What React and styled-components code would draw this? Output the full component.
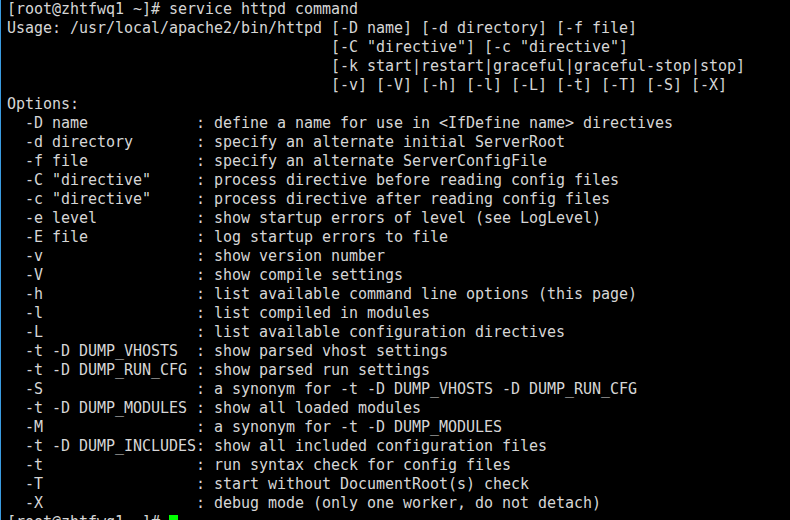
import styled, { createGlobalStyle } from "styled-components"

const Global = createGlobalStyle`
  html, body {
    margin: 0;
    padding: 0;
    background: #000;
  }
`

const Terminal = styled.div`
  width: 790px;
  height: 520px;
  overflow: hidden;
  background: #000;
  border-left: 1px solid #3a9be0;
  box-sizing: border-box;
  padding-left: 6px;
`

const Screen = styled.pre`
  margin: 0;
  font-family: "DejaVu Sans Mono", "Liberation Mono", monospace;
  font-size: 15px;
  letter-spacing: -0.03px;
  line-height: 19px;
  color: #d6d6d6;
  white-space: pre;
`

const Cursor = styled.span`
  display: inline-block;
  width: 9px;
  height: 15px;
  background: #00ff00;
  vertical-align: -3px;
`

const lines = [
  "[root@zhtfwq1 ~]# service httpd command",
  "Usage: /usr/local/apache2/bin/httpd [-D name] [-d directory] [-f file]",
  "                                    [-C \"directive\"] [-c \"directive\"]",
  "                                    [-k start|restart|graceful|graceful-stop|stop]",
  "                                    [-v] [-V] [-h] [-l] [-L] [-t] [-T] [-S] [-X]",
  "Options:",
  "  -D name            : define a name for use in <IfDefine name> directives",
  "  -d directory       : specify an alternate initial ServerRoot",
  "  -f file            : specify an alternate ServerConfigFile",
  "  -C \"directive\"     : process directive before reading config files",
  "  -c \"directive\"     : process directive after reading config files",
  "  -e level           : show startup errors of level (see LogLevel)",
  "  -E file            : log startup errors to file",
  "  -v                 : show version number",
  "  -V                 : show compile settings",
  "  -h                 : list available command line options (this page)",
  "  -l                 : list compiled in modules",
  "  -L                 : list available configuration directives",
  "  -t -D DUMP_VHOSTS  : show parsed vhost settings",
  "  -t -D DUMP_RUN_CFG : show parsed run settings",
  "  -S                 : a synonym for -t -D DUMP_VHOSTS -D DUMP_RUN_CFG",
  "  -t -D DUMP_MODULES : show all loaded modules",
  "  -M                 : a synonym for -t -D DUMP_MODULES",
  "  -t -D DUMP_INCLUDES: show all included configuration files",
  "  -t                 : run syntax check for config files",
  "  -T                 : start without DocumentRoot(s) check",
  "  -X                 : debug mode (only one worker, do not detach)",
]

export default function App() {
  return (
    <>
      <Global />
      <Terminal>
        <Screen>
          {lines.join("\n")}
          {"\n[root@zhtfwq1 ~]# "}
          <Cursor />
        </Screen>
      </Terminal>
    </>
  )
}
